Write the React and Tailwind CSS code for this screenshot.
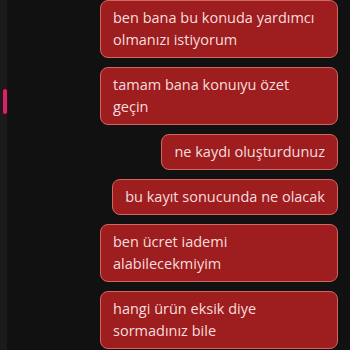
const MESSAGES = [
  'ben bana bu konuda yardımcı olmanızı istiyorum',
  'tamam bana konuıyu özet geçin',
  'ne kaydı oluşturdunuz',
  'bu kayıt sonucunda ne olacak',
  'ben ücret iademi alabilecekmiyim',
  'hangi ürün eksik diye sormadınız bile',
];

function Bubble({ text }) {
  return (
    <div
      className="max-w-[238px] rounded-[8px] border border-[#d0665f] bg-[#9e1d1e] px-[12px] py-[6px] text-[14.5px] leading-[22px] text-[#f6dede]"
      style={{ fontFamily: '"Open Sans", sans-serif' }}
    >
      {text}
    </div>
  );
}

export default function App() {
  return (
    <div className="flex h-[350px] w-[350px] overflow-hidden bg-[#111111]">
      {/* Sidebar edge */}
      <div className="w-[7px] shrink-0 bg-[#1b1b1b]">
        <div className="ml-[2px] mt-[88px] h-[27px] w-[6px] rounded-full border border-[#2a0c18] bg-[#d6246a]" />
      </div>

      {/* Chat */}
      <div className="flex flex-1 flex-col items-end gap-[9px] pr-[12px]">
        {MESSAGES.map((m, i) => (
          <Bubble key={i} text={m} />
        ))}
      </div>
    </div>
  );
}
